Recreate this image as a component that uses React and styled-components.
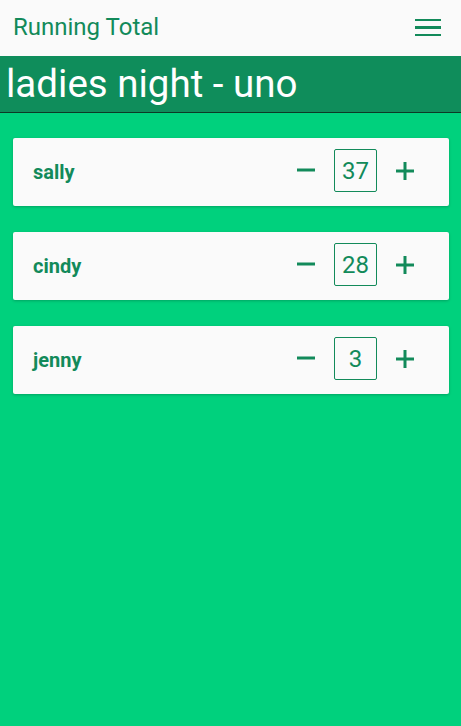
import React, { useState } from "react";
import styled, { createGlobalStyle } from "styled-components";

const GlobalStyle = createGlobalStyle`
  html, body {
    margin: 0;
    padding: 0;
    background: #00d17d;
    font-family: Roboto, "Noto Sans", sans-serif;
  }
  #root {
    min-height: 100vh;
    background: #00d17d;
  }
`;

const Page = styled.div`
  min-height: 100vh;
  background: #00d17d;
`;

const Header = styled.header`
  height: 56px;
  background: #fafafa;
  display: flex;
  align-items: center;
  justify-content: space-between;
  padding: 0 20px 0 13px;
  box-sizing: border-box;
`;

const AppTitle = styled.div`
  font-size: 24px;
  color: #128a5a;
  line-height: 1;
  margin-top: -2px;
`;

const MenuButton = styled.button`
  border: none;
  background: transparent;
  padding: 0;
  width: 26px;
  height: 18px;
  margin-top: -1px;
  display: flex;
  flex-direction: column;
  justify-content: space-between;
  cursor: pointer;
`;

const MenuLine = styled.span`
  display: block;
  width: 26px;
  height: 2.4px;
  background: #128a5a;
`;

const TitleBar = styled.h1`
  margin: 0;
  height: 57px;
  box-sizing: border-box;
  background: #0f8d5b;
  border-bottom: 1px solid #0c3a26;
  color: #ffffff;
  font-size: 38.5px;
  font-weight: 400;
  line-height: 56px;
  padding-left: 6px;
  white-space: nowrap;
`;

const List = styled.div`
  display: flex;
  flex-direction: column;
  gap: 26px;
  padding: 25px 12px 25px 13px;
`;

const Card = styled.div`
  height: 68px;
  background: #fafafa;
  border-radius: 2px;
  box-shadow: 0 1px 3px rgba(0, 0, 0, 0.22);
  display: flex;
  align-items: center;
  justify-content: space-between;
  padding: 0 25px 0 20px;
  box-sizing: border-box;
`;

const Name = styled.div`
  font-size: 20px;
  font-weight: 700;
  color: #128a5a;
`;

const Controls = styled.div`
  display: flex;
  align-items: center;
  gap: 9px;
  margin-bottom: 3px;
`;

const StepButton = styled.button`
  width: 38px;
  height: 38px;
  border: none;
  background: transparent;
  padding: 0;
  display: flex;
  align-items: center;
  justify-content: center;
  cursor: pointer;
  margin-top: ${(p) => (p.$minus ? "-2px" : "0")};
`;

const CountBox = styled.div`
  width: 43px;
  height: 43px;
  box-sizing: border-box;
  border: 1px solid #128a5a;
  border-radius: 2px;
  display: flex;
  align-items: center;
  justify-content: center;
  font-size: 24px;
  color: #128a5a;
  font-weight: 400;
`;

const MinusIcon = () => (
  <svg width="18" height="18" viewBox="0 0 18 18">
    <rect x="0" y="7.5" width="18" height="3" fill="#128a5a" />
  </svg>
);

const PlusIcon = () => (
  <svg width="18" height="18" viewBox="0 0 18 18">
    <rect x="0" y="7.5" width="18" height="3" fill="#128a5a" />
    <rect x="7.5" y="0" width="3" height="18" fill="#128a5a" />
  </svg>
);

const initialPlayers = [
  { name: "sally", total: 37 },
  { name: "cindy", total: 28 },
  { name: "jenny", total: 3 },
];

export default function App() {
  const [players, setPlayers] = useState(initialPlayers);
  const change = (i, d) =>
    setPlayers((ps) => ps.map((p, j) => (j === i ? { ...p, total: p.total + d } : p)));

  return (
    <Page>
      <GlobalStyle />
      <Header>
        <AppTitle>Running Total</AppTitle>
        <MenuButton aria-label="menu">
          <MenuLine />
          <MenuLine />
          <MenuLine />
        </MenuButton>
      </Header>
      <TitleBar>ladies night - uno</TitleBar>
      <List>
        {players.map((p, i) => (
          <Card key={p.name}>
            <Name>{p.name}</Name>
            <Controls>
              <StepButton $minus aria-label="decrease" onClick={() => change(i, -1)}>
                <MinusIcon />
              </StepButton>
              <CountBox>{p.total}</CountBox>
              <StepButton aria-label="increase" onClick={() => change(i, 1)}>
                <PlusIcon />
              </StepButton>
            </Controls>
          </Card>
        ))}
      </List>
    </Page>
  );
}
